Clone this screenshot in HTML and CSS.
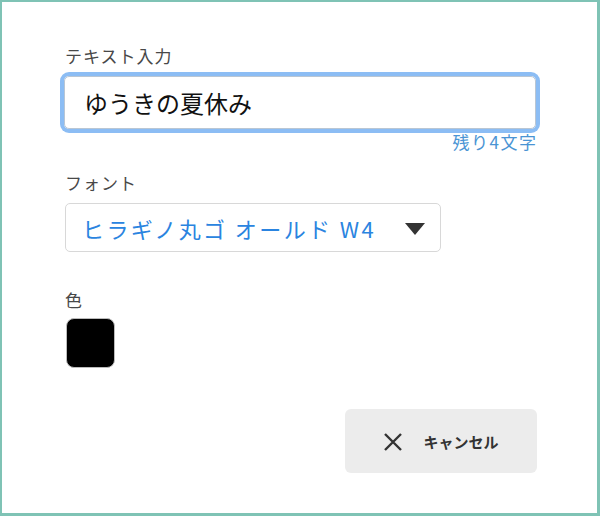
FILE: index.html
```html
<!DOCTYPE html>
<html lang="ja">
<head>
<meta charset="utf-8">
<link rel="stylesheet" href="styles.css">
</head>
<body>
<div class="frame">
  <div class="field">
    <div class="label">テキスト入力</div>
    <div class="text-input">ゆうきの夏休み</div>
    <div class="counter">残り4文字</div>
  </div>
  <div class="field field-font">
    <div class="label">フォント</div>
    <div class="select">
      <span class="select-value">ヒラギノ丸ゴ オールド W4</span>
      <svg class="caret" width="20" height="12" viewBox="0 0 20 12"><polygon points="0,0 20,0 10,12" fill="#333"/></svg>
    </div>
  </div>
  <div class="field field-color">
    <div class="label label-color">色</div>
    <div class="swatch"></div>
  </div>
  <div class="actions">
    <button class="btn-cancel" type="button">
      <svg width="20" height="20" viewBox="0 0 20 20"><path d="M2 2 L18 18 M18 2 L2 18" stroke="#333" stroke-width="2.4" fill="none"/></svg>
      <span>キャンセル</span>
    </button>
  </div>
</div>
</body>
</html>
```

FILE: styles.css
```css
html, body {
  margin: 0;
  padding: 0;
  background: #fff;
}
* { box-sizing: border-box; }

.frame {
  width: 600px;
  height: 516px;
  border-style: solid;
  border-color: #7fc3b5;
  border-width: 2px 3px 3px 2px;
  padding: 44px 0 0 62px;
  font-family: "Noto Sans CJK JP", "Noto Sans", sans-serif;
  color: #444;
}

.field { width: 472px; }

.label {
  font-size: 17px;
  line-height: 20px;
  padding-left: 1px;
  letter-spacing: 1px;
  color: #484848;
}

.text-input {
  margin-top: 10px;
  height: 53px;
  border: 1px solid #b9c6d4;
  border-radius: 5px;
  box-shadow: 0 0 0 4px #8cbdf4;
  display: flex;
  align-items: center;
  padding-left: 19px;
  font-size: 24px;
  color: #111;
}

.counter {
  margin-top: 3px;
  margin-right: -1.5px;
  text-align: right;
  font-size: 17px;
  line-height: 20px;
  letter-spacing: 1.5px;
  color: #4a94d4;
}

.field-font { margin-top: 21px; }

.select {
  margin-top: 10px;
  margin-left: 1px;
  width: 376px;
  height: 49px;
  border: 1px solid #d8d8d8;
  border-radius: 5px;
  display: flex;
  align-items: center;
  justify-content: space-between;
  padding: 0 15px 0 16px;
}

.select-value {
  font-size: 22px;
  letter-spacing: 2.4px;
  color: #2a84e0;
}

.caret { display: block; margin-top: 2px; }

.field-color { margin-top: 38px; }

.swatch {
  margin-top: 8px;
  margin-left: 2px;
  width: 49px;
  height: 50px;
  background: #000;
  border: 1px solid #bbb;
  border-radius: 8px;
}

.actions {
  width: 473px;
  display: flex;
  justify-content: flex-end;
  margin-top: 41px;
}

.btn-cancel {
  width: 192px;
  height: 64px;
  border: none;
  border-radius: 6px;
  background: #ececec;
  display: flex;
  align-items: center;
  justify-content: center;
  gap: 20px;
  font-family: "Noto Sans CJK JP", "Noto Sans", sans-serif;
  font-size: 15px;
  font-weight: bold;
  color: #333;
  padding: 0;
}
.btn-cancel svg { display: block; margin-top: 2px; }
```
